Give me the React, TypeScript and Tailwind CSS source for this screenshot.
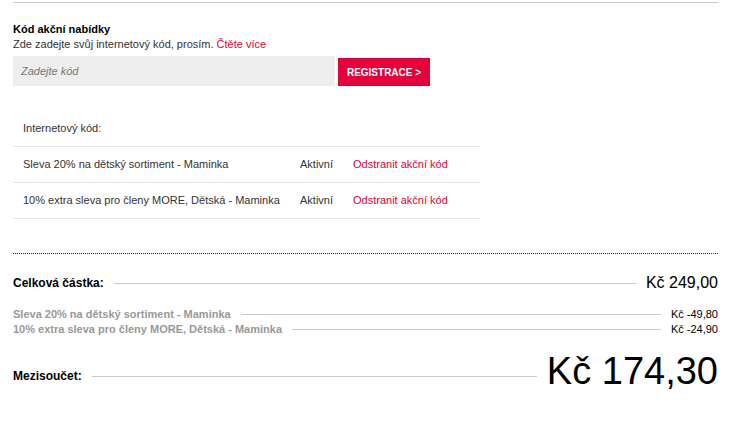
import React from "react"

type Code = {
  name: string
  status: string
}

const codes: Code[] = [
  { name: "Sleva 20% na dětský sortiment - Maminka", status: "Aktivní" },
  { name: "10% extra sleva pro členy MORE, Dětská - Maminka", status: "Aktivní" },
]

const discounts = [
  { label: "Sleva 20% na dětský sortiment - Maminka", amount: "Kč -49,80" },
  { label: "10% extra sleva pro členy MORE, Dětská - Maminka", amount: "Kč -24,90" },
]

// vodorovná čára mezi popiskem a částkou
function Filler() {
  return <div className="mx-[10px] h-px flex-1 bg-[#cccccc]" />
}

export default function App() {
  return (
    <div className="h-[424px] w-[738px] bg-white pl-[13px] pr-[20px] font-['Liberation_Sans',Arial,sans-serif] text-[#333]">
      <div className="pt-[2px]">
        <div className="border-t border-[#cccccc]" />
      </div>

      {/* Akční kód */}
      <div className="mt-[19px] text-[11px] font-bold leading-[15px] text-black">Kód akční nabídky</div>
      <div className="text-[11px] leading-[15px] text-[#333]">
        Zde zadejte svůj internetový kód, prosím. <span className="text-[#e4003b]">Čtěte více</span>
      </div>

      <div className="mt-[4px] flex items-start">
        <input
          placeholder="Zadejte kód"
          className="h-[30px] w-[322px] bg-[#eeeeee] px-[8px] text-[11px] italic text-[#333] outline-none placeholder:text-[#777]"
        />
        <button className="ml-[3px] mt-[2px] h-[28px] w-[92px] bg-[#e4003b] text-[10px] font-bold text-white">
          REGISTRACE &gt;
        </button>
      </div>

      <div className="mt-[25px] w-[467px] text-[11px] text-[#333]">
        <div className="flex h-[36px] items-center border-b border-[#e6e6dc] pl-[10px]">Internetový kód:</div>
        {codes.map((c) => (
          <div key={c.name} className="flex h-[36px] items-center border-b border-[#e6e6dc] pl-[10px]">
            <span className="w-[277px]">{c.name}</span>
            <span className="w-[53px]">{c.status}</span>
            <span className="text-[#e4003b]">Odstranit akční kód</span>
          </div>
        ))}
      </div>

      <div className="mt-[34px] border-t border-dotted border-[#333]" />

      {/* Souhrn */}
      <div className="mt-[19px] flex h-[20px] items-center">
        <span className="text-[12px] font-bold text-black">Celková částka:</span>
        <Filler />
        <span className="text-[16px] text-black">Kč 249,00</span>
      </div>

      <div className="mt-[14px]">
        {discounts.map((d) => (
          <div key={d.label} className="flex h-[15px] items-center">
            <span className="text-[11px] font-bold text-[#999]">{d.label}</span>
            <Filler />
            <span className="text-[11px] text-black">{d.amount}</span>
          </div>
        ))}
      </div>

      <div className="mt-[18px] flex h-[42px] items-center">
        <span className="text-[12px] font-bold text-black">Mezisoučet:</span>
        <Filler />
        <span className="mb-[10px] text-[38px] leading-[38px] text-black">Kč 174,30</span>
      </div>
    </div>
  )
}
